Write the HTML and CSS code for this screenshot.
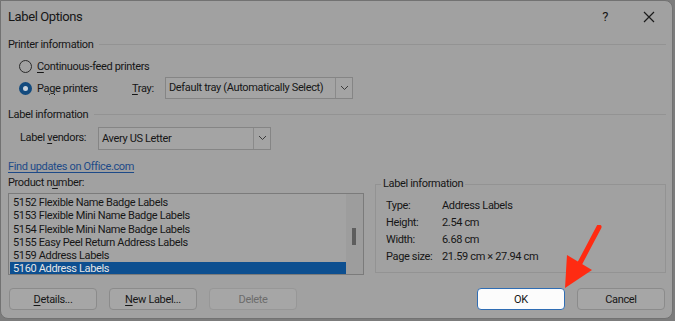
FILE: index.html
```html
<!DOCTYPE html>
<html lang="en">
<head>
    <meta charset="UTF-8">
    <title>Label Options</title>
    <link rel="stylesheet" href="styles.css">
</head>
<body>
    <div class="dialog">
        <div class="titlebar">
            <span class="title">Label Options</span>
            <span class="help">?</span>
            <svg class="close" width="12" height="12" viewBox="0 0 12 12">
                <path d="M1 1 L11 11 M11 1 L1 11" stroke="#1b1b1b" stroke-width="1.2" fill="none"/>
            </svg>
        </div>
        <div class="content">
            <div class="group-head"><span>Printer information</span><i></i></div>
            <div class="radio-row first">
                <span class="radio"></span>
                <span><u>C</u>ontinuous-feed printers</span>
            </div>
            <div class="radio-row">
                <span class="radio checked"></span>
                <span class="page-label">Pa<u>g</u>e printers</span>
                <span class="tray-label"><u>T</u>ray:</span>
                <div class="select tray">
                    <span class="value">Default tray (Automatically Select)</span>
                    <span class="arrow"><svg width="9" height="6" viewBox="0 0 9 6"><path d="M1 1 L4.5 4.5 L8 1" stroke="#3a3a3a" fill="none"/></svg></span>
                </div>
            </div>
            <div class="group-head second"><span>Label information</span><i></i></div>
            <div class="vendor-row">
                <span class="vendor-label">Label <u>v</u>endors:</span>
                <div class="select vendor">
                    <span class="value">Avery US Letter</span>
                    <span class="arrow"><svg width="9" height="6" viewBox="0 0 9 6"><path d="M1 1 L4.5 4.5 L8 1" stroke="#3a3a3a" fill="none"/></svg></span>
                </div>
            </div>
            <div class="link">Find updates on Office.com</div>
            <div class="bottom">
                <div class="products">
                    <div class="caption">Product n<u>u</u>mber:</div>
                    <div class="listbox">
                        <ul>
                            <li>5152 Flexible Name Badge Labels</li>
                            <li>5153 Flexible Mini Name Badge Labels</li>
                            <li>5154 Flexible Mini Name Badge Labels</li>
                            <li>5155 Easy Peel Return Address Labels</li>
                            <li>5159 Address Labels</li>
                            <li class="selected">5160 Address Labels</li>
                        </ul>
                        <div class="scrollbar"><span class="thumb"></span></div>
                    </div>
                </div>
                <fieldset class="info">
                    <legend>Label information</legend>
                    <div class="info-row"><span>Type:</span><span>Address Labels</span></div>
                    <div class="info-row"><span>Height:</span><span>2.54 cm</span></div>
                    <div class="info-row"><span>Width:</span><span>6.68 cm</span></div>
                    <div class="info-row"><span>Page size:</span><span>21.59 cm × 27.94 cm</span></div>
                </fieldset>
            </div>
            <div class="buttons">
                <div class="btn-group left">
                    <button><u>D</u>etails...</button>
                    <button><u>N</u>ew Label...</button>
                    <button class="disabled">Delete</button>
                </div>
                <div class="btn-group">
                    <button class="ok">OK</button>
                    <button>Cancel</button>
                </div>
            </div>
        </div>
        <svg class="pointer" width="50" height="70" viewBox="0 0 50 70">
            <path d="M36 2 L17 38" stroke="#ff2b12" stroke-width="5" stroke-linecap="round" fill="none"/>
            <polygon points="4,30 29,45 2,63" fill="#ff2b12"/>
        </svg>
    </div>
</body>
</html>
```

FILE: styles.css
```css
* {
    margin: 0;
    padding: 0;
    box-sizing: border-box;
}

body {
    background-color: #7c7c7c;
    font-family: Roboto, "Noto Sans", sans-serif;
    font-size: 11px;
    letter-spacing: -0.35px;
    color: #161616;
    width: 675px;
    height: 321px;
    overflow: hidden;
    white-space: nowrap;
}

u {
    text-decoration-thickness: 1px;
    text-underline-offset: 2px;
}

.dialog {
    position: relative;
    width: 673px;
    height: 319px;
    background-color: #a1a1a1;
    border: 1px solid #727272;
    border-radius: 0 8px 8px 8px;
}

.titlebar {
    display: flex;
    align-items: flex-start;
    height: 36px;
    padding: 7px 0 0 7px;
}

.title {
    font-size: 13px;
    letter-spacing: -0.4px;
    line-height: 18px;
    flex: 1;
}

.help {
    font-size: 13px;
    line-height: 18px;
    margin-right: 35px;
}

.close {
    margin: 3px 17px 0 0;
}

.content {
    padding: 0 6px 0 7px;
}

.group-head {
    display: flex;
    align-items: center;
    height: 16px;
    line-height: 16px;
}

.group-head i {
    flex: 1;
    height: 1px;
    background-color: #939393;
    margin: 0 0 1px 6px;
}

.group-head.second {
    margin-top: 8px;
}

.radio-row {
    display: flex;
    align-items: center;
    height: 22px;
    padding-left: 11px;
}

.radio-row.first {
    margin-top: 3px;
    height: 21px;
}

.radio {
    width: 13px;
    height: 13px;
    border: 1px solid #2a2a2a;
    border-radius: 50%;
    margin-right: 5px;
}

.radio.checked {
    border: 4px solid #124a7e;
    background-color: #c9d2dc;
}

.page-label {
    width: 95px;
}

.tray-label {
    width: 33px;
}

.select {
    display: flex;
    border: 1px solid #858585;
    background-color: #a4a4a4;
}

.select .value {
    flex: 1;
    padding-left: 3px;
}

.select .arrow {
    width: 17px;
    border-left: 1px solid #8a8a8a;
    display: flex;
    align-items: center;
    justify-content: center;
}

.select.tray {
    width: 188px;
    height: 22px;
    line-height: 20px;
}

.vendor-row {
    display: flex;
    align-items: center;
    height: 24px;
    margin-top: 2px;
    padding-left: 12px;
}

.vendor-label {
    width: 78px;
}

.select.vendor {
    width: 173px;
    height: 23px;
    line-height: 21px;
    margin-top: 2px;
}

.link {
    margin-top: 10px;
    height: 16px;
    line-height: 16px;
    color: #1d4a88;
    text-decoration: underline;
    text-underline-offset: 2px;
}

.bottom {
    display: flex;
    align-items: flex-start;
}

.products {
    width: 356px;
}

.caption {
    height: 16px;
    line-height: 16px;
}

.listbox {
    display: flex;
    margin-top: 2px;
    height: 82px;
    border: 1px solid #7b7b7b;
    background-color: #a3a3a3;
    overflow: hidden;
}

.listbox ul {
    flex: 1;
    list-style: none;
    padding: 2px 0 0 1px;
}

.listbox li {
    height: 13.3px;
    line-height: 13.3px;
    padding-left: 3px;
}

.listbox li.selected {
    background-color: #0d4f90;
    color: #e6e6e6;
}

.scrollbar {
    width: 17px;
    background-color: #9d9d9d;
    padding: 34px 0 0 6px;
}

.thumb {
    display: block;
    width: 4px;
    height: 17px;
    background-color: #5e5e5e;
}

.info {
    margin: 1px 0 0 11px;
    width: 291px;
    height: 97px;
    border: 1px solid #939393;
    padding: 5px 0 0 5px;
}

.info legend {
    padding: 0 2px;
    line-height: 16px;
}

.info-row {
    display: flex;
    line-height: 17px;
    padding-left: 5px;
}

.info-row span:first-child {
    width: 56px;
}

.buttons {
    display: flex;
    justify-content: space-between;
    margin-top: 13px;
    padding-right: 1px;
}

.btn-group {
    display: flex;
    gap: 12px;
}

.btn-group.left {
    gap: 12px;
    padding-left: 1px;
}

button {
    font-family: inherit;
    font-size: inherit;
    letter-spacing: inherit;
    color: inherit;
    width: 88px;
    height: 22px;
    background-color: #a6a6a6;
    border: 1px solid #8b8b8b;
    border-radius: 4px;
}

button.disabled {
    color: #6c6c6c;
    border-color: #979797;
}

button.ok {
    background-color: #fcfcfc;
    border-color: #2f6db4;
}

.pointer {
    position: absolute;
    left: 562px;
    top: 224px;
}
```
